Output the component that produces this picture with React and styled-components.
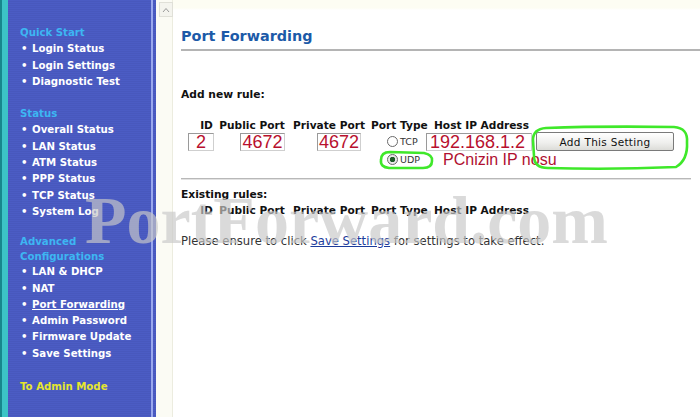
import React from "react";
import styled, { createGlobalStyle } from "styled-components";

const GlobalStyle = createGlobalStyle`
  body {
    margin: 0;
    background: #ffffff;
  }
`;

const Page = styled.div`
  position: relative;
  width: 700px;
  height: 417px;
  display: flex;
  overflow: hidden;
  font-family: "DejaVu Sans", Verdana, sans-serif;
  background: #ffffff;
`;

const Sidebar = styled.nav`
  width: 156px;
  flex-shrink: 0;
  box-sizing: border-box;
  padding: 25px 0 0 20px;
  background:
    linear-gradient(90deg, #17878c 0 2px, #3cc4c6 2px 8px, transparent 8px 151px, #9aa8ee 151px 153px, transparent 153px),
    repeating-linear-gradient(0deg, #4b5cc4 0 1px, #4858bd 1px 2px);
`;

const Group = styled.div`
  margin-top: ${(p) => p.$gap || 0}px;
`;

const GroupTitle = styled.div`
  color: ${(p) => p.$color || "#3db6f2"};
  font-weight: bold;
  font-size: 10.2px;
  line-height: ${(p) => p.$lh || 16.3}px;
  width: 115px;
`;

const NavItem = styled.div`
  display: flex;
  color: #ffffff;
  font-weight: bold;
  font-size: 10.2px;
  line-height: 16.3px;
  white-space: nowrap;

  &::before {
    content: "•";
    width: 11px;
    padding-left: 1px;
    flex-shrink: 0;
  }

  span {
    text-decoration: ${(p) => (p.$active ? "underline" : "none")};
  }
`;

const ScrollCol = styled.div`
  width: 17px;
  flex-shrink: 0;
  background: #fbfbf4;
  border-right: 1px solid #ececdf;
  padding-top: 2px;
  box-sizing: border-box;
`;

const ScrollBtn = styled.div`
  width: 12px;
  height: 13px;
  margin-left: 3px;
  border: 1px solid #e0e0d8;
  background: #f4f4ee;
  display: flex;
  align-items: center;
  justify-content: center;
`;

const Main = styled.main`
  flex: 1;
  padding-left: 8px;
  background: linear-gradient(180deg, #fdfdf3 0 8px, #ffffff 10px);
`;

const Title = styled.h1`
  margin: 0;
  padding-top: 27px;
  height: 22px;
  border-bottom: 2px solid #b4b4b4;
  color: #1c5aa8;
  font-size: 14.4px;
  line-height: 18px;
  font-weight: bold;
`;

const Label = styled.div`
  margin-top: ${(p) => p.$mt}px;
  font-size: 10.7px;
  font-weight: bold;
  color: #111;
  line-height: 14px;
`;

const RuleGrid = styled.div`
  display: grid;
  grid-template-columns: 29px 70px 84px 55px 107px 150px;
  margin-left: 7px;
  margin-top: ${(p) => p.$mt}px;
  align-items: center;
`;

const Head = styled.div`
  font-size: 10.6px;
  font-weight: bold;
  color: #111;
  line-height: 14px;
  text-align: center;
  white-space: nowrap;
  padding-left: ${(p) => p.$pl || 0}px;
`;

const Cell = styled.div`
  display: flex;
  align-items: center;
  padding-left: ${(p) => p.$pl || 0}px;
  height: ${(p) => p.$h || 19}px;
  grid-column: ${(p) => p.$span || "auto"};
`;

const Field = styled.div`
  width: ${(p) => p.$w}px;
  height: 18px;
  box-sizing: border-box;
  border: 1px solid #9a9a9a;
  border-right-color: #cfcfcf;
  border-bottom-color: #cfcfcf;
  background: #fff;
  color: #b8102e;
  font-family: "Liberation Sans", Arial, sans-serif;
  font-size: 18px;
  line-height: 16px;
  text-align: ${(p) => p.$align || "center"};
  padding-left: ${(p) => p.$pl || 0}px;
`;

const Radio = styled.span`
  width: 9px;
  height: 9px;
  border-radius: 50%;
  border: 1px solid #6a6a6a;
  background: ${(p) => (p.$on ? "radial-gradient(circle, #1f5a2a 0 2.5px, #e8e8e8 3px)" : "#fff")};
  margin-right: 2px;
  flex-shrink: 0;
`;

const RadioText = styled.span`
  font-size: 9.5px;
  color: #333;
`;

const AddButton = styled.div`
  width: 138px;
  height: 19px;
  margin-left: 3px;
  box-sizing: border-box;
  border: 1px solid #7a7a7a;
  border-radius: 2px;
  background: linear-gradient(180deg, #ffffff 0%, #eeeeec 60%, #dcdcd8 100%);
  font-size: 10.5px;
  color: #111;
  letter-spacing: 0.3px;
  display: flex;
  align-items: center;
  justify-content: center;
`;

const Note = styled.span`
  color: #b01030;
  font-family: "Liberation Sans", Arial, sans-serif;
  font-size: 16px;
  white-space: nowrap;
`;

const Rule = styled.div`
  margin-top: 10px;
  width: 510px;
  border-top: 1px solid #b8b8b8;
  border-bottom: 1px solid #e2e2e2;
`;

const Hint = styled.p`
  margin: 17px 0 0;
  font-size: 11.6px;
  color: #333;
  line-height: 14px;
  white-space: nowrap;

  a {
    color: #1c3c9c;
    text-decoration: underline;
  }
`;

const Watermark = styled.div`
  position: absolute;
  left: 85px;
  top: 186px;
  font-family: "Liberation Serif", "Times New Roman", serif;
  font-weight: bold;
  font-size: 68px;
  line-height: 68px;
  color: rgba(200, 200, 200, 0.68);
  pointer-events: none;
  white-space: nowrap;
`;

const Marks = styled.svg`
  position: absolute;
  left: 0;
  top: 0;
  pointer-events: none;
`;

const sections = [
  { title: "Quick Start", gap: 0, items: ["Login Status", "Login Settings", "Diagnostic Test"] },
  { title: "Status", gap: 16, items: ["Overall Status", "LAN Status", "ATM Status", "PPP Status", "TCP Status", "System Log"] },
  {
    title: "Advanced Configurations",
    gap: 14,
    lh: 15,
    items: ["LAN & DHCP", "NAT", "Port Forwarding", "Admin Password", "Firmware Update", "Save Settings"],
  },
];

const headers = [
  { t: "ID", pl: 8 },
  { t: "Public Port" },
  { t: "Private Port" },
  { t: "Port Type" },
  { t: "Host IP Address", pl: 4 },
];

export default function App() {
  return (
    <>
      <GlobalStyle />
      <Page>
        <Sidebar>
          {sections.map((s) => (
            <Group key={s.title} $gap={s.gap}>
              <GroupTitle $lh={s.lh}>{s.title}</GroupTitle>
              {s.items.map((i) => (
                <NavItem key={i} $active={i === "Port Forwarding"}>
                  <span>{i}</span>
                </NavItem>
              ))}
            </Group>
          ))}
          <Group $gap={17}>
            <GroupTitle $color="#e6e62e">To Admin Mode</GroupTitle>
          </Group>
        </Sidebar>

        <ScrollCol>
          <ScrollBtn>
            <svg width="8" height="6" viewBox="0 0 8 6">
              <path d="M1 5 L4 1.5 L7 5" fill="none" stroke="#9a9a9a" strokeWidth="1" />
            </svg>
          </ScrollBtn>
        </ScrollCol>

        <Main>
          <Title>Port Forwarding</Title>
          <Label $mt={37}>Add new rule:</Label>

          <RuleGrid $mt={16}>
            {headers.map((h) => (
              <Head key={h.t} $pl={h.pl}>
                {h.t}
              </Head>
            ))}
            <div />

            <Cell>
              <Field $w={26}>2</Field>
            </Cell>
            <Cell $pl={23}>
              <Field $w={45}>4672</Field>
            </Cell>
            <Cell $pl={30}>
              <Field $w={44}>4672</Field>
            </Cell>
            <Cell $pl={16}>
              <Radio />
              <RadioText>TCP</RadioText>
            </Cell>
            <Cell>
              <Field $w={106} $align="left" $pl={3}>
                192.168.1.2
              </Field>
            </Cell>
            <Cell>
              <AddButton>Add This Setting</AddButton>
            </Cell>

            <Cell $span="4 / 5" $pl={16} $h={17}>
              <Radio $on />
              <RadioText>UDP</RadioText>
            </Cell>
            <Cell $span="5 / 7" $pl={17} $h={17}>
              <Note>PCnizin IP nosu</Note>
            </Cell>
          </RuleGrid>

          <Rule />

          <Label $mt={8}>Existing rules:</Label>
          <RuleGrid $mt={1}>
            {headers.map((h) => (
              <Head key={h.t} $pl={h.pl}>
                {h.t}
              </Head>
            ))}
          </RuleGrid>

          <Hint>
            Please ensure to click <a>Save Settings</a> for settings to take effect.
          </Hint>
        </Main>

        <Watermark>PortForward.com</Watermark>

        <Marks width="700" height="417" viewBox="0 0 700 417">
          <path
            d="M546 128 Q600 126 674 127 Q688 128 687 142 Q688 160 676 167 Q610 170 548 168 Q534 168 534 156 L533 140 Q533 129 546 128 Z"
            fill="none"
            stroke="#3fe82a"
            strokeWidth="2.6"
          />
          <path
            d="M390 152 L424 153 Q433 155 432 161 Q432 168 423 168 L389 168 Q380 167 381 160 Q381 152 390 152 Z"
            fill="none"
            stroke="#3fe82a"
            strokeWidth="2.6"
          />
        </Marks>
      </Page>
    </>
  );
}
